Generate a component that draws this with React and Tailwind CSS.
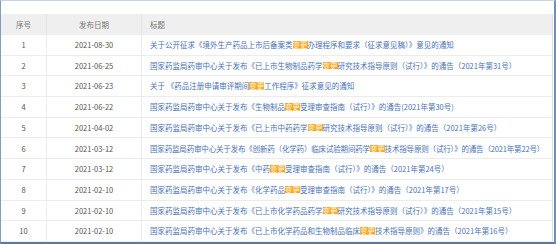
import React from "react";

const rows = [
  ["1", "2021-08-30", ["关于公开征求《境外生产药品上市后备案类", "变更", "办理程序和要求（征求意见稿）》意见的通知"]],
  ["2", "2021-06-25", ["国家药监局药审中心关于发布《已上市生物制品药学", "变更", "研究技术指导原则（试行）》的通告（2021年第31号）"]],
  ["3", "2021-06-23", ["关于 《药品注册申请审评期间", "变更", "工作程序》征求意见的通知"]],
  ["4", "2021-06-22", ["国家药监局药审中心关于发布《生物制品", "变更", "受理审查指南（试行）》的通告(2021年第30号)"]],
  ["5", "2021-04-02", ["国家药监局药审中心关于发布《已上市中药药学", "变更", "研究技术指导原则（试行）》的通告（2021年第26号）"]],
  ["6", "2021-03-12", ["国家药监局药审中心关于发布《创新药（化学药）临床试验期间药学", "变更", "技术指导原则（试行）》的通告（2021年第22号）"]],
  ["7", "2021-03-12", ["国家药监局药审中心关于发布《中药", "变更", "受理审查指南（试行）》的通告（2021年第24号）"]],
  ["8", "2021-02-10", ["国家药监局药审中心关于发布《化学药品", "变更", "受理审查指南（试行）》的通告（2021年第17号）"]],
  ["9", "2021-02-10", ["国家药监局药审中心关于发布《已上市化学药品药学", "变更", "研究技术指导原则（试行）》的通告（2021年第15号）"]],
  ["10", "2021-02-10", ["国家药监局药审中心关于发布《已上市化学药品和生物制品临床", "变更", "技术指导原则》的通告（2021年第16号）"]],
];

export default function App() {
  return (
    <div
      className="w-[556px] h-[244px] bg-white border-l border-l-[#7f9cc6] border-t border-t-[#c8d5e8] border-r-2 border-r-[#6f8fbb] border-b-2 border-b-[#5a7aa6] overflow-hidden text-[7.5px] leading-none"
      style={{ fontFamily: '"Noto Sans CJK SC", "Noto Sans", sans-serif' }}
    >
      <div className="mt-[13px] mr-[1px] border-r border-[#e2e2e2]">
        <div className="grid grid-cols-[46px_95px_1fr] h-[21px] bg-[#efefef] text-[#777]">
          <div className="flex items-center justify-center border-r border-[#e4e4e4]">序号</div>
          <div className="flex items-center justify-center border-r border-[#e4e4e4]">发布日期</div>
          <div className="flex items-center pl-[8px]">标题</div>
        </div>
        {rows.map(([n, d, t]) => (
          <div
            key={n}
            className="grid grid-cols-[46px_95px_1fr] h-[20.7px] border-b border-[#ececec] text-[#555]"
          >
            <div className="flex items-center justify-center border-r border-[#ececec]">{n}</div>
            <div className="flex items-center justify-center border-r border-[#ececec]">{d}</div>
            <div
              className={
                n === "6"
                  ? "flex items-center pl-[8px] whitespace-nowrap overflow-hidden text-[#4a72b6] tracking-[-0.17px]"
                  : "flex items-center pl-[8px] whitespace-nowrap overflow-hidden text-[#4a72b6]"
              }
            >
              <span>{t[0]}</span>
              <span className="bg-[#f7a928] text-[#fff4dc]">{t[1]}</span>
              <span>{t[2]}</span>
            </div>
          </div>
        ))}
      </div>
    </div>
  );
}
